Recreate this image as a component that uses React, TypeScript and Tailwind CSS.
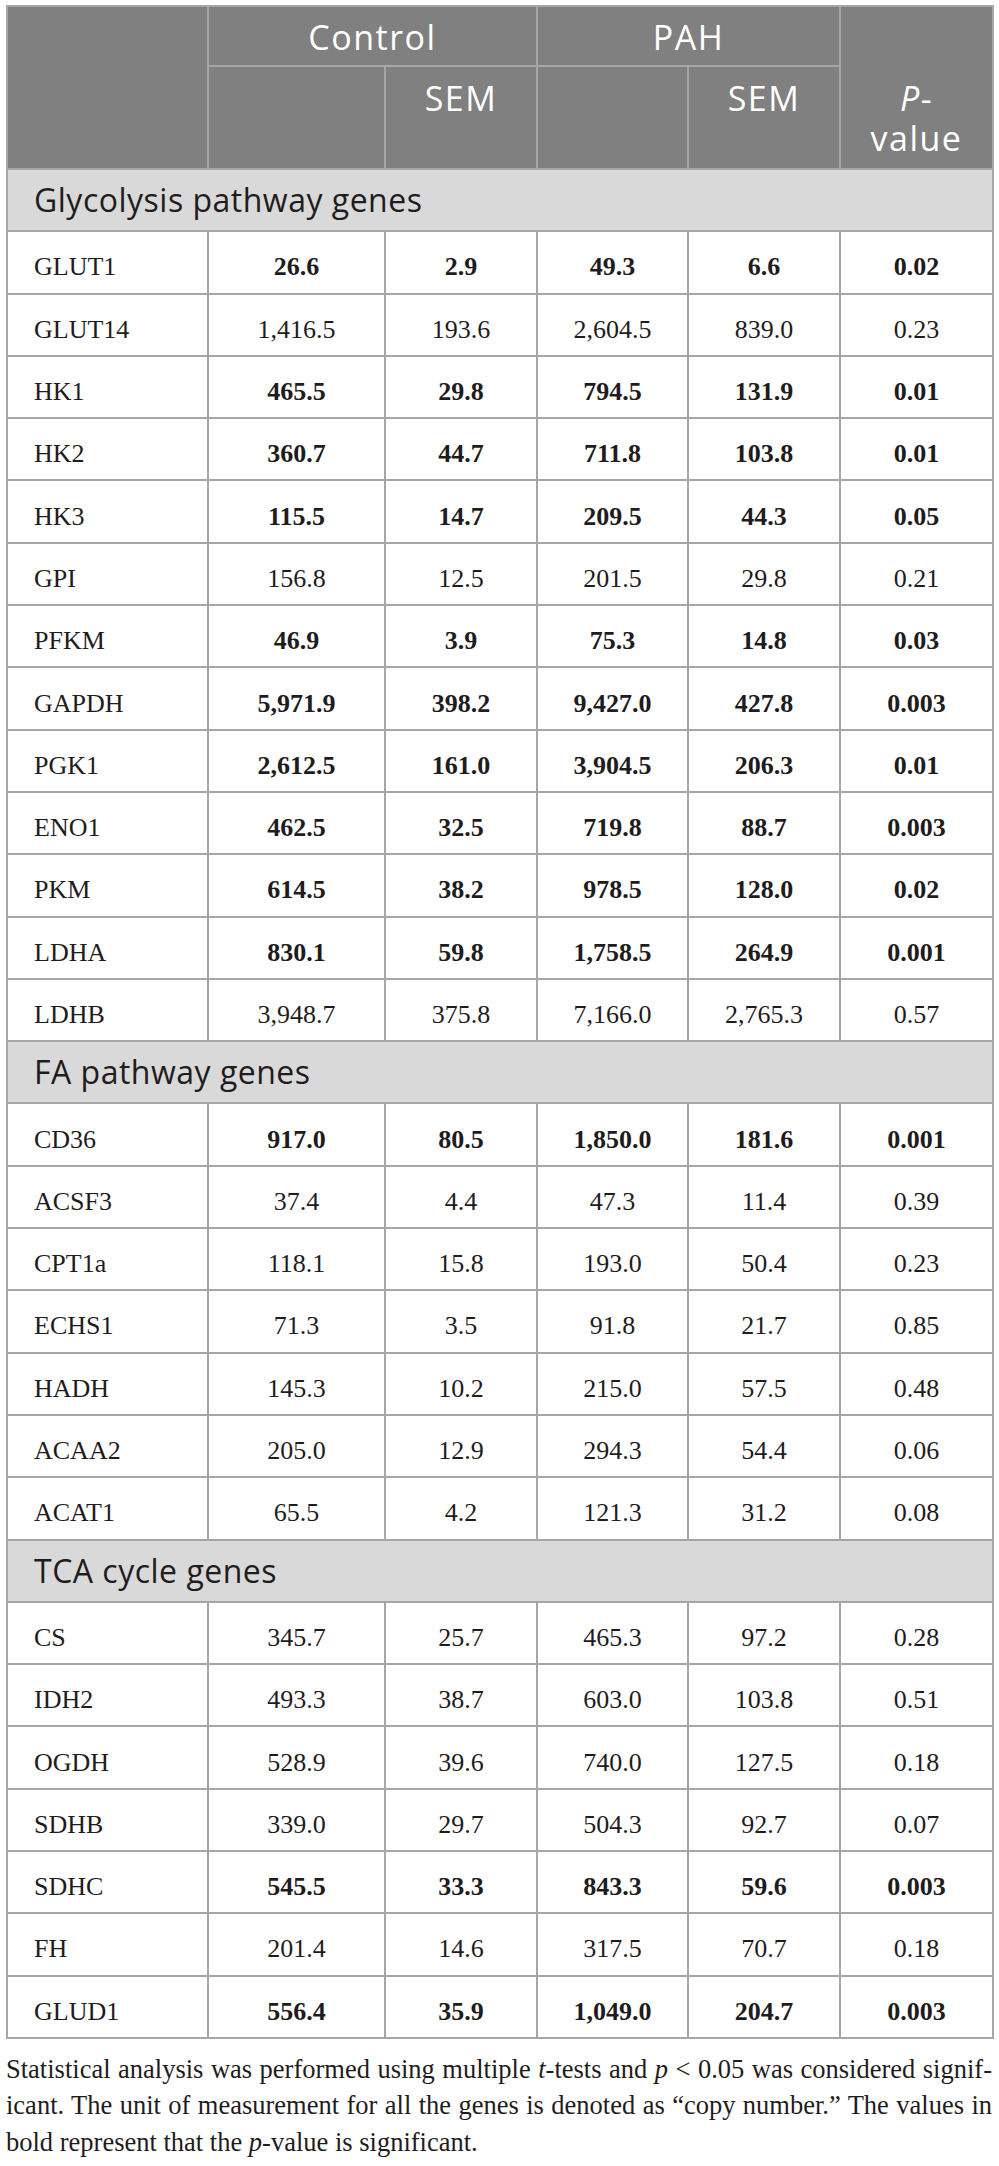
type Row = [string, string, string, string, string, string, boolean];

const sections: { title: string; rows: Row[] }[] = [
  {
    title: "Glycolysis pathway genes",
    rows: [
      ["GLUT1", "26.6", "2.9", "49.3", "6.6", "0.02", true],
      ["GLUT14", "1,416.5", "193.6", "2,604.5", "839.0", "0.23", false],
      ["HK1", "465.5", "29.8", "794.5", "131.9", "0.01", true],
      ["HK2", "360.7", "44.7", "711.8", "103.8", "0.01", true],
      ["HK3", "115.5", "14.7", "209.5", "44.3", "0.05", true],
      ["GPI", "156.8", "12.5", "201.5", "29.8", "0.21", false],
      ["PFKM", "46.9", "3.9", "75.3", "14.8", "0.03", true],
      ["GAPDH", "5,971.9", "398.2", "9,427.0", "427.8", "0.003", true],
      ["PGK1", "2,612.5", "161.0", "3,904.5", "206.3", "0.01", true],
      ["ENO1", "462.5", "32.5", "719.8", "88.7", "0.003", true],
      ["PKM", "614.5", "38.2", "978.5", "128.0", "0.02", true],
      ["LDHA", "830.1", "59.8", "1,758.5", "264.9", "0.001", true],
      ["LDHB", "3,948.7", "375.8", "7,166.0", "2,765.3", "0.57", false],
    ],
  },
  {
    title: "FA pathway genes",
    rows: [
      ["CD36", "917.0", "80.5", "1,850.0", "181.6", "0.001", true],
      ["ACSF3", "37.4", "4.4", "47.3", "11.4", "0.39", false],
      ["CPT1a", "118.1", "15.8", "193.0", "50.4", "0.23", false],
      ["ECHS1", "71.3", "3.5", "91.8", "21.7", "0.85", false],
      ["HADH", "145.3", "10.2", "215.0", "57.5", "0.48", false],
      ["ACAA2", "205.0", "12.9", "294.3", "54.4", "0.06", false],
      ["ACAT1", "65.5", "4.2", "121.3", "31.2", "0.08", false],
    ],
  },
  {
    title: "TCA cycle genes",
    rows: [
      ["CS", "345.7", "25.7", "465.3", "97.2", "0.28", false],
      ["IDH2", "493.3", "38.7", "603.0", "103.8", "0.51", false],
      ["OGDH", "528.9", "39.6", "740.0", "127.5", "0.18", false],
      ["SDHB", "339.0", "29.7", "504.3", "92.7", "0.07", false],
      ["SDHC", "545.5", "33.3", "843.3", "59.6", "0.003", true],
      ["FH", "201.4", "14.6", "317.5", "70.7", "0.18", false],
      ["GLUD1", "556.4", "35.9", "1,049.0", "204.7", "0.003", true],
    ],
  },
];

const hd = "border-2 border-[#a6a6a6] bg-[#808080] text-white font-['Open_Sans',sans-serif] text-[34px] leading-[40px] tracking-[1.5px] font-normal";
const td = "border-2 border-[#a6a6a6] h-[62.3px] pt-[10px] align-middle text-[26px] leading-[30px]";

export default function App() {
  return (
    <div className="bg-white w-[999px] min-h-[2166px] pl-[6px] pr-[7px] pt-[5px] text-[#1f1c1d]">
      <table className="w-[986px] table-fixed border-collapse font-['Liberation_Serif',serif]">
        <colgroup>
          <col className="w-[201px]" />
          <col className="w-[177px]" />
          <col className="w-[152px]" />
          <col className="w-[151px]" />
          <col className="w-[152px]" />
          <col className="w-[153px]" />
        </colgroup>
        <thead>
          <tr className="h-[60px]">
            <th rowSpan={2} className={hd}></th>
            <th colSpan={2} className={`${hd} text-center align-middle pt-[2px]`}>Control</th>
            <th colSpan={2} className={`${hd} text-center align-middle pt-[2px]`}>PAH</th>
            <th rowSpan={2} className={`${hd} text-center align-top pt-[71px]`}>
              <span className="italic">P</span>-<br />value
            </th>
          </tr>
          <tr className="h-[103px]">
            <th className={hd}></th>
            <th className={`${hd} text-center align-top pt-[11px]`}>SEM</th>
            <th className={hd}></th>
            <th className={`${hd} text-center align-top pt-[11px]`}>SEM</th>
          </tr>
        </thead>
        <tbody>
          {sections.map((s) => (
            <SectionRows key={s.title} title={s.title} rows={s.rows} />
          ))}
        </tbody>
      </table>

      <div className="mt-[12px] w-[986px] font-['Liberation_Serif',serif] text-[26.5px] leading-[36.5px] text-[#1f1c1d]">
        <div className="whitespace-nowrap text-justify [text-align-last:justify]">
          Statistical analysis was performed using multiple <i>t</i>-tests and <i>p</i> &lt; 0.05 was considered signif-
        </div>
        <div className="whitespace-nowrap text-justify [text-align-last:justify]">
          icant. The unit of measurement for all the genes is denoted as “copy number.” The values in
        </div>
        <div className="whitespace-nowrap">
          bold represent that the <i>p</i>-value is significant.
        </div>
      </div>
    </div>
  );
}

function SectionRows({ title, rows }: { title: string; rows: Row[] }) {
  return (
    <>
      <tr>
        <td
          colSpan={6}
          className="border-2 border-[#a6a6a6] h-[62.3px] bg-[#d9d9d9] pl-[26px] align-middle font-['Open_Sans',sans-serif] text-[32px] leading-[36px] tracking-[0.5px] text-[#1f1c1d]"
        >
          {title}
        </td>
      </tr>
      {rows.map((r) => (
        <tr key={r[0]}>
          <td className={`${td} pl-[26px] text-left`}>{r[0]}</td>
          {r.slice(1, 6).map((v, i) => (
            <td key={i} className={`${td} text-center ${r[6] ? "font-bold" : ""}`}>
              {v as string}
            </td>
          ))}
        </tr>
      ))}
    </>
  );
}
